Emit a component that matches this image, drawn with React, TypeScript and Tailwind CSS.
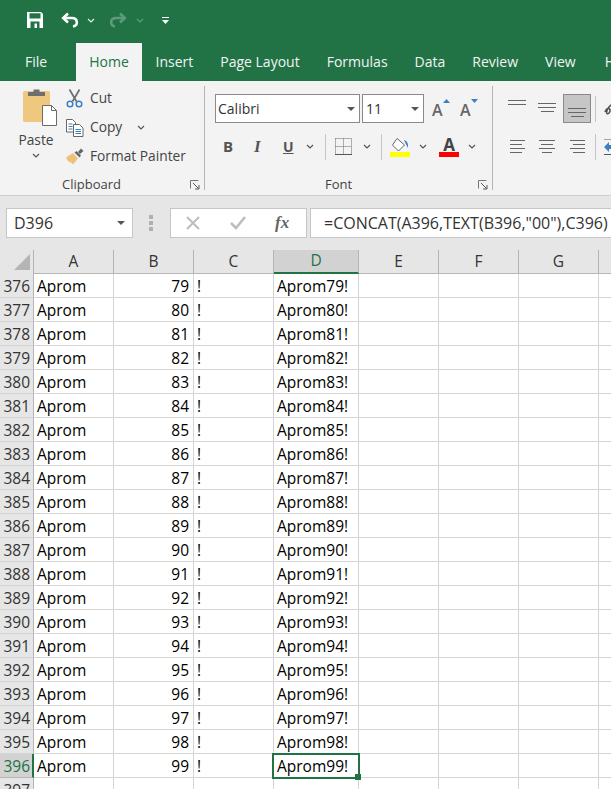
const ui = '[font-family:"Open_Sans","Noto_Sans",sans-serif]';

const tabs = ['Insert', 'Page Layout', 'Formulas', 'Data', 'Review', 'View', 'Help'];
const columns = [
  { name: 'A', width: 'w-[80px]' },
  { name: 'B', width: 'w-[80px]' },
  { name: 'C', width: 'w-[80px]' },
  { name: 'D', width: 'w-[85px]' },
  { name: 'E', width: 'w-[80px]' },
  { name: 'F', width: 'w-[80px]' },
  { name: 'G', width: 'w-[80px]' },
];
const rows = Array.from({ length: 21 }, (_, i) => ({ id: 376 + i, value: 79 + i }));

function Chevron({ className = 'stroke-[#555]' }: { className?: string }) {
  return (
    <svg width="8" height="5" viewBox="0 0 8 5" fill="none" className={className}>
      <path d="M1 1l3 3 3-3" strokeWidth="1.2" />
    </svg>
  );
}

function DropArrow() {
  return (
    <svg width="8" height="4" viewBox="0 0 8 4" className="fill-[#555]">
      <path d="M0 0h8L4 4z" />
    </svg>
  );
}

function Launcher() {
  return (
    <svg width="10" height="10" viewBox="0 0 10 10" fill="none" className="stroke-[#777]">
      <path d="M.5 8.5v-8h8" />
      <path d="M3 3l5.5 5.5M9 5v4H5" className="stroke-[#555]" />
    </svg>
  );
}

function SaveIcon() {
  return (
    <svg width="16" height="16" viewBox="0 0 16 16">
      <path
        fillRule="evenodd"
        className="fill-white"
        d="M0 0h14l2 2v14H0zM2.500 1.200v5.300h11V1.200zM3.500 9.500v6.500h9V9.500z"
      />
      <rect x="7.500" y="11.500" width="2.500" height="4.500" className="fill-white" />
    </svg>
  );
}

function UndoIcon({ className }: { className: string }) {
  return (
    <svg width="19" height="16" viewBox="0 0 19 16" fill="none" className={className}>
      <path d="M7 1.500L2.200 6 7 10.500" strokeWidth="2.600" />
      <path d="M3 6h8c6 0 6.500 7.500 1 8.500" strokeWidth="2.600" />
    </svg>
  );
}

function PasteIcon() {
  return (
    <svg width="36" height="40" viewBox="0 0 36 40">
      <rect x="2" y="4" width="27" height="31" rx="1.500" className="fill-[#edc87e]" />
      <path d="M7 9V5h5.500V2.500h6V5H24v4z" className="fill-[#6e6e6e]" />
      <path d="M21.500 18.500h9l5 5v15h-14z" className="fill-white stroke-[#6b6b6b]" />
      <path d="M30.500 18.500v5h5" fill="none" className="stroke-[#6b6b6b]" />
    </svg>
  );
}

function CutIcon() {
  return (
    <svg width="17" height="19" viewBox="0 0 17 19" fill="none">
      <path d="M3.500 0.500l7 12M13.500 0.500l-7 12" strokeWidth="1.700" className="stroke-[#6e6e6e]" />
      <circle cx="4" cy="15" r="2.800" strokeWidth="1.500" className="stroke-[#3f7fbf]" />
      <circle cx="13" cy="15" r="2.800" strokeWidth="1.500" className="stroke-[#3f7fbf]" />
    </svg>
  );
}

function CopyIcon() {
  return (
    <svg width="18" height="18" viewBox="0 0 18 18" fill="none">
      <path d="M.5.500h6l3 3V13H.5z" className="fill-white stroke-[#666]" />
      <path d="M2.500 5h4M2.500 7.500h4M2.500 10h4" className="stroke-[#3f7fbf]" />
      <path d="M7.500 5.500h6l3.500 3.500v8.500H7.500z" className="fill-white stroke-[#666]" />
      <path d="M9.500 10.500h5.500M9.500 12.500h5.500M9.500 14.500h5.500" className="stroke-[#3f7fbf]" />
    </svg>
  );
}

function PainterIcon() {
  return (
    <svg width="18" height="17" viewBox="0 0 18 17">
      <path d="M0 9.500L7 5l5 5.500L7 16.500 5 14 4.500 15.500 3 13 2 13.500z" className="fill-[#ecc27a]" />
      <path d="M8.500 4.500l5 5 1.500-2L10.500 3z" className="fill-[#666]" />
      <path d="M12 4l3-3.500 2.500 2.500L14 6z" className="fill-[#666]" />
    </svg>
  );
}

function GrowFont({ shrink }: { shrink?: boolean }) {
  return (
    <div className="relative h-[29px] w-[28px]">
      <span className={`${ui} absolute left-[5px] top-[4px] text-[16px] font-semibold text-[#666]`}>A</span>
      <svg width="7" height="4" viewBox="0 0 7 4" className="absolute left-[16px] top-[5px] fill-[#3f7fbf]">
        <path d={shrink ? 'M0 0h7L3.500 4z' : 'M0 4h7L3.500 0z'} />
      </svg>
    </div>
  );
}

function BordersIcon() {
  return (
    <svg width="17" height="17" viewBox="0 0 17 17" fill="none">
      <path d="M.5.500h16v16M.5.500v16M8.500.500v16M.5 8.500h16" strokeDasharray="1 1" className="stroke-[#666]" />
      <path d="M0 16.500h17" className="stroke-[#555]" />
    </svg>
  );
}

function FillIcon() {
  return (
    <svg width="20" height="20" viewBox="0 0 20 20">
      <path d="M7 1.500l7.500 6.500-6 6L2.500 8z" className="fill-white stroke-[#666]" />
      <path d="M14 3c3.500 1 4.500 4 4 8-1.500-3-2.500-4.500-4-8z" className="fill-[#3f7fbf]" />
      <rect y="15" width="20" height="5" className="fill-[#ffff00]" />
    </svg>
  );
}

function FontColorIcon() {
  return (
    <div className="flex h-[20px] w-[20px] flex-col items-center">
      <span className={`${ui} h-[15px] text-[17px] font-bold leading-[15px] text-[#444]`}>A</span>
      <span className="h-[5px] w-[20px] bg-[#ff0000]" />
    </div>
  );
}

function AlignLines({ lines }: { lines: string[] }) {
  return (
    <div className="flex flex-col items-center gap-[3px]">
      {lines.map((w, i) => (
        <span key={i} className={`h-px bg-[#666] ${w}`} />
      ))}
    </div>
  );
}

function ClipRow({ icon, label, chevron }: { icon: React.ReactNode; label: string; chevron?: boolean }) {
  return (
    <div className="flex h-[29px] items-center">
      <div className="flex w-[26px] justify-start pl-[2px]">{icon}</div>
      <span className="text-[13.75px] text-[#444]">{label}</span>
      {chevron && (
        <span className="ml-[15px]">
          <Chevron />
        </span>
      )}
    </div>
  );
}

function GroupLabel({ text, labelClass }: { text: string; labelClass: string }) {
  return (
    <div className="relative mt-auto flex h-[10px] items-center">
      <span className={`text-[13px] text-[#444] ${labelClass}`}>{text}</span>
      <span className="absolute right-[4px] top-0">
        <Launcher />
      </span>
    </div>
  );
}

function Ribbon() {
  return (
    <div className={`${ui} flex h-[115px] border-b border-[#d0d0d0] bg-[#f3f3f3] pt-[5px]`}>
      <div className="flex h-[104px] w-[205px] shrink-0 flex-col border-r border-[#b5b5b5]">
        <div className="flex">
          <div className="flex w-[64px] shrink-0 flex-col items-center pl-[8px]">
            <div className="ml-[5px] mt-[1px]">
              <PasteIcon />
            </div>
            <span className="mt-[3px] text-[13.75px] text-[#444]">Paste</span>
            <span className="mt-[2px]">
              <Chevron />
            </span>
          </div>
          <div className="-mt-[2px]">
            <ClipRow icon={<CutIcon />} label="Cut" />
            <ClipRow icon={<CopyIcon />} label="Copy" chevron />
            <ClipRow icon={<PainterIcon />} label="Format Painter" />
          </div>
        </div>
        <GroupLabel text="Clipboard" labelClass="ml-[62px]" />
      </div>

      <div className="flex h-[104px] w-[288px] shrink-0 flex-col border-r border-[#b5b5b5]">
        <div className="ml-[10px] mt-[8px] flex h-[29px]">
          <div className="flex w-[145px] items-center justify-between border border-[#8a8a8a] bg-white pl-[2px] pr-[4px]">
            <span className="text-[14px] text-[#333]">Calibri</span>
            <DropArrow />
          </div>
          <div className="ml-[2px] flex w-[62px] items-center justify-between border border-[#8a8a8a] bg-white pl-[3px] pr-[4px]">
            <span className="text-[14px] text-[#333]">11</span>
            <DropArrow />
          </div>
          <div className="ml-[3px] flex">
            <GrowFont />
            <GrowFont shrink />
          </div>
        </div>
        <div className="ml-[18px] mt-[9px] flex h-[29px] items-center text-[#555]">
          <span className="w-[31px] text-[15px] font-bold leading-none">B</span>
          <span className="w-[29px] font-['Liberation_Serif'] text-[17px] font-bold italic leading-none">I</span>
          <span className="w-[23px] text-[14px] font-bold leading-none underline">U</span>
          <Chevron />
          <span className="ml-[11px] h-[26px] w-px bg-[#c6c6c6]" />
          <span className="ml-[9px]">
            <BordersIcon />
          </span>
          <span className="ml-[11px]">
            <Chevron />
          </span>
          <span className="ml-[10px] h-[26px] w-px bg-[#c6c6c6]" />
          <span className="ml-[8px]">
            <FillIcon />
          </span>
          <span className="ml-[9px]">
            <Chevron />
          </span>
          <span className="ml-[12px]">
            <FontColorIcon />
          </span>
          <span className="ml-[9px]">
            <Chevron />
          </span>
        </div>
        <GroupLabel text="Font" labelClass="ml-[120px]" />
      </div>

      <div className="flex min-w-0 flex-1 flex-col overflow-hidden pl-[10px]">
        <div className="mt-[8px] flex h-[29px]">
          <div className="w-[28px] shrink-0 pt-[6px]">
            <AlignLines lines={['w-[18px]', 'w-[18px]']} />
          </div>
          <div className="w-[32px] shrink-0 pt-[9px]">
            <AlignLines lines={['w-[18px]', 'w-[18px]', 'w-[13px]']} />
          </div>
          <div className="flex w-[28px] shrink-0 items-end justify-center border border-[#8a8a8a] bg-[#c6c6c6] pb-[5px]">
            <AlignLines lines={['w-[18px]', 'w-[18px]', 'w-[13px]']} />
          </div>
          <span className="ml-[4px] mt-[2px] h-[26px] w-px shrink-0 bg-[#c6c6c6]" />
          <svg width="12" height="14" viewBox="0 0 12 14" fill="none" className="ml-[8px] mt-[8px] shrink-0 stroke-[#555]">
            <path d="M1 10c3-7 7-2 4 1S1 8 7 3l4 3" strokeWidth="1.600" />
          </svg>
        </div>
        <div className="mt-[9px] flex h-[29px] items-center">
          <div className="ml-[7px] flex w-[29px] shrink-0 flex-col gap-[3px]">
            <span className="h-px w-[15px] bg-[#666]" />
            <span className="h-px w-[12px] bg-[#666]" />
            <span className="h-px w-[15px] bg-[#666]" />
            <span className="h-px w-[12px] bg-[#666]" />
          </div>
          <div className="w-[16px] shrink-0">
            <AlignLines lines={['w-[16px]', 'w-[12px]', 'w-[16px]', 'w-[10px]']} />
          </div>
          <div className="ml-[15px] flex w-[15px] shrink-0 flex-col items-end gap-[3px]">
            <span className="h-px w-[15px] bg-[#666]" />
            <span className="h-px w-[12px] bg-[#666]" />
            <span className="h-px w-[15px] bg-[#666]" />
            <span className="h-px w-[12px] bg-[#666]" />
          </div>
          <span className="ml-[10px] h-[26px] w-px shrink-0 bg-[#c6c6c6]" />
          <svg width="8" height="16" viewBox="0 0 8 16" className="ml-[8px] shrink-0">
            <path d="M0 0h8M0 15.500h8" stroke="#555" />
            <path d="M5 3v3h3v4H5v3L0 8z" className="fill-[#3f7fbf]" />
          </svg>
        </div>
      </div>
    </div>
  );
}

function FormulaBar() {
  return (
    <div className="flex h-[54px] items-center bg-[#e6e6e6] pl-[6px]">
      <div className="flex h-[30px] w-[127px] shrink-0 items-center justify-between border border-[#c6c6c6] bg-white pl-[7px] pr-[7px]">
        <span className={`${ui} text-[16px] text-[#333]`}>D396</span>
        <DropArrow />
      </div>
      <div className="ml-[16px] flex w-[4px] shrink-0 flex-col gap-[2px]">
        <span className="h-[4px] w-[4px] bg-[#b0b0b0]" />
        <span className="h-[4px] w-[4px] bg-[#b0b0b0]" />
        <span className="h-[4px] w-[4px] bg-[#b0b0b0]" />
      </div>
      <div className="ml-[17px] flex h-[30px] w-[137px] shrink-0 items-center border border-[#c6c6c6] bg-white">
        <svg width="14" height="14" viewBox="0 0 14 14" fill="none" className="ml-[15px] stroke-[#bdbdbd]">
          <path d="M1 1l12 12M13 1L1 13" strokeWidth="2" />
        </svg>
        <svg width="16" height="14" viewBox="0 0 16 14" fill="none" className="ml-[30px] stroke-[#bdbdbd]">
          <path d="M1 7l5 5L15 1" strokeWidth="2.600" />
        </svg>
        <span className="ml-[29px] font-['Liberation_Serif'] text-[17px] font-bold italic text-[#666]">fx</span>
      </div>
      <div className="ml-[3px] flex h-[30px] min-w-0 flex-1 items-center overflow-hidden border border-[#c6c6c6] border-r-0 bg-white pl-[13px]">
        <span className={`${ui} whitespace-nowrap text-[16px] text-[#333]`}>
          =CONCAT(A396,TEXT(B396,"00"),C396)
        </span>
      </div>
    </div>
  );
}

function Sheet() {
  return (
    <div className={`${ui} text-[15.5px] text-black`}>
      <div className="flex h-[24px] bg-[#e6e6e6]">
        <div className="relative w-[34px] shrink-0 border-r border-[#b5b5b5]">
          <svg width="16" height="16" viewBox="0 0 16 16" className="absolute left-[14px] top-[4px] fill-[#b5b5b5]">
            <path d="M16 0v16H0z" />
          </svg>
        </div>
        {columns.map((c) => (
          <div
            key={c.name}
            className={
              c.name === 'D'
                ? `flex shrink-0 items-center justify-center border-b-2 border-r border-b-[#217346] border-r-[#b5b5b5] bg-[#d2d2d2] text-[#217346] ${c.width}`
                : `flex shrink-0 items-center justify-center border-b border-r border-b-[#b5b5b5] border-r-[#b5b5b5] text-[#333] ${c.width}`
            }
          >
            {c.name}
          </div>
        ))}
        <div className="flex-1 border-b border-[#b5b5b5]" />
      </div>
      {rows.map((r) => (
        <div key={r.id} className="flex h-[24px] leading-[24px]">
          <div
            className={
              r.id === 396
                ? 'w-[34px] shrink-0 border-b border-r-2 border-b-[#b5b5b5] border-r-[#217346] bg-[#d2d2d2] pr-[2px] text-right text-[#217346]'
                : 'w-[34px] shrink-0 border-b border-r border-b-[#d4d4d4] border-r-[#b5b5b5] bg-[#e6e6e6] pr-[3px] text-right text-[#333]'
            }
          >
            {r.id}
          </div>
          <div className="w-[80px] shrink-0 border-b border-r border-[#d4d4d4] pl-[3px]">Aprom</div>
          <div className="w-[80px] shrink-0 border-b border-r border-[#d4d4d4] pr-[4px] text-right">{r.value}</div>
          <div className="w-[80px] shrink-0 border-b border-r border-[#d4d4d4] pl-[3px]">!</div>
          <div className="relative w-[85px] shrink-0 border-b border-r border-[#d4d4d4] pl-[3px]">
            Aprom{r.value}!
            {r.id === 396 && (
              <>
                <span className="absolute -left-[2px] -top-[1px] h-[26px] w-[88px] border-2 border-[#217346]" />
                <span className="absolute -bottom-[3px] -right-[3px] h-[6px] w-[6px] bg-[#217346]" />
              </>
            )}
          </div>
          <div className="w-[80px] shrink-0 border-b border-r border-[#d4d4d4]" />
          <div className="w-[80px] shrink-0 border-b border-r border-[#d4d4d4]" />
          <div className="w-[80px] shrink-0 border-b border-r border-[#d4d4d4]" />
          <div className="flex-1 border-b border-[#d4d4d4]" />
        </div>
      ))}
      <div className="flex h-[24px] leading-[24px]">
        <div className="w-[34px] shrink-0 border-r border-[#b5b5b5] bg-[#e6e6e6] pr-[3px] text-right text-[#333]">397</div>
        <div className="w-[80px] shrink-0 border-r border-[#d4d4d4]" />
        <div className="w-[80px] shrink-0 border-r border-[#d4d4d4]" />
        <div className="w-[80px] shrink-0 border-r border-[#d4d4d4]" />
        <div className="w-[85px] shrink-0 border-r border-[#d4d4d4]" />
        <div className="w-[80px] shrink-0 border-r border-[#d4d4d4]" />
        <div className="w-[80px] shrink-0 border-r border-[#d4d4d4]" />
        <div className="w-[80px] shrink-0 border-r border-[#d4d4d4]" />
      </div>
    </div>
  );
}

export default function App() {
  return (
    <div className="h-[789px] w-[611px] overflow-hidden bg-white">
      <div className={`${ui} bg-[#217346]`}>
        <div className="flex h-[43px] items-center pb-[3px] pl-[27px]">
          <SaveIcon />
          <span className="ml-[18px]">
            <UndoIcon className="stroke-white" />
          </span>
          <span className="ml-[7px]">
            <Chevron className="stroke-[#e6efe9]" />
          </span>
          <span className="ml-[13px] -scale-x-100">
            <UndoIcon className="stroke-[#5f9a7c]" />
          </span>
          <span className="ml-[9px]">
            <Chevron className="stroke-[#5f9a7c]" />
          </span>
          <svg width="7" height="7" viewBox="0 0 7 7" className="ml-[18px] fill-white">
            <path d="M0 0h7v1H0zM0 3h7L3.500 7z" />
          </svg>
        </div>
        <div className="flex h-[38px] items-stretch overflow-hidden whitespace-nowrap text-[14px] leading-[38px] text-[#f3f3f3]">
          <div className="w-[76px] shrink-0 pl-[25px]">File</div>
          <div className="w-[66px] shrink-0 bg-[#f3f3f3] text-center text-[#217346]">Home</div>
          {tabs.map((t) => (
            <div key={t} className="shrink-0 px-[13.5px] last:ml-[2px]">
              {t}
            </div>
          ))}
        </div>
      </div>
      <Ribbon />
      <FormulaBar />
      <Sheet />
    </div>
  );
}
